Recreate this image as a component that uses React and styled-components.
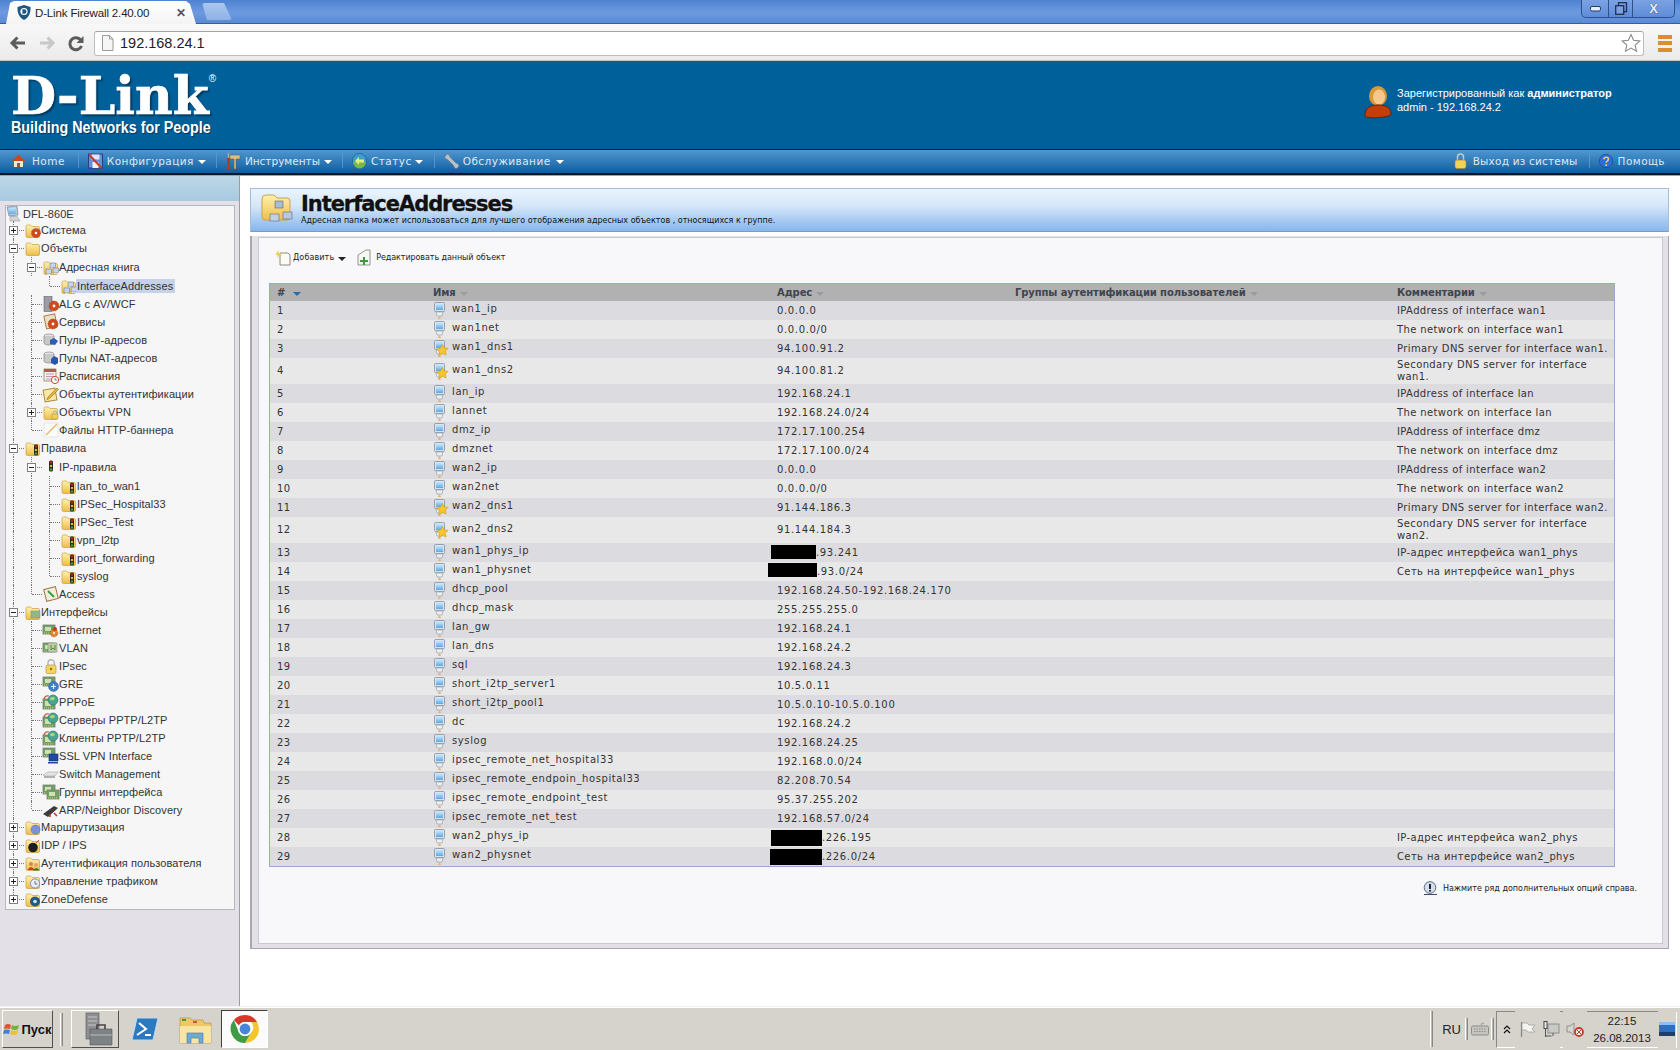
import React from "react";
import styled, { createGlobalStyle } from "styled-components";

const Global = createGlobalStyle`
  html, body { margin: 0; padding: 0; background: #fff; }
  #root { width: 1680px; height: 1050px; overflow: hidden; }
  * { box-sizing: border-box; }
`;

const Page = styled.div`
  width: 1680px; height: 1050px; display: flex; flex-direction: column; overflow: hidden;
  font-family: "Liberation Sans", Arial, sans-serif; color: #222;
`;

/* ---------- browser chrome ---------- */
const TabStrip = styled.div`
  height: 24px; flex: none; display: flex; align-items: flex-end; position: relative;
  background: linear-gradient(#4f83d0, #6c9ae0 55%, #5a8ad6);
  border-bottom: 1px solid #3a5f96;
`;
const Tab = styled.div`
  width: 202px; height: 23px; margin-bottom: -1px; padding: 0 10px 0 16px; display: flex; align-items: center; gap: 3px;
  background: linear-gradient(#ffffff, #f4f4f4);
  clip-path: polygon(0 100%, 6px 100%, 10px 2px, 14px 0, 186px 0, 190px 3px, 196px 100%, 202px 100%);
  font-size: 11.5px; color: #222; white-space: nowrap;
`;
const TabTitle = styled.span`flex: 1; letter-spacing: -0.15px;`;
const TabClose = styled.span`width: 16px; font-size: 12px; font-weight: bold; color: #555; line-height: 1;`;
const NewTab = styled.div`
  width: 30px; height: 17px; margin: 0 0 3px 0; border-radius: 3px 4px 3px 3px;
  background: linear-gradient(#a9c6ee, #8fb2e6);
  clip-path: polygon(0 0, 22px 0, 30px 100%, 5px 100%);
`;
const WindowButtons = styled.div`
  position: absolute; right: 5px; top: 0; height: 18px; display: flex;
  border: 1px solid #30508a; border-top: 0; border-radius: 0 0 5px 5px;
  background: linear-gradient(#7ba3e4, #5f8cd8);
`;
const WinBtn = styled.div`
  width: ${p => p.$w}px; display: flex; align-items: center; justify-content: center;
  border-left: ${p => (p.$first ? "0" : "1px solid #30508a")};
`;
const CloseGlyph = styled.span`font-size: 13px; font-weight: bold; color: #e8eefa; text-shadow: 0 0 1px #234;`;
const Toolbar = styled.div`
  height: 37px; flex: none; display: flex; align-items: center; padding: 2px 8px 0 3px;
  background: linear-gradient(#f8f8f8, #ebebeb); border-bottom: 1px solid #c4c4c4;
`;
const ToolBtn = styled.div`width: 29px; display: flex; justify-content: center; margin-right: ${p => p.$mr || 0}px;`;
const Omnibox = styled.div`
  flex: 1; height: 25px; display: flex; align-items: center; padding: 0 2px 0 6px;
  background: #fff; border: 1px solid #bdbdbd; border-top-color: #a4a4a4; border-radius: 3px;
`;
const Url = styled.span`flex: 1; font-size: 14.5px; margin-left: 6px; color: #222;`;
const Burger = styled.div`
  width: 14px; margin-left: 14px; height: 17px; display: flex; flex-direction: column; justify-content: space-between;
  & > i { display: block; height: 4px; background: #dd8c2e; }
`;

/* ---------- D-Link header ---------- */
const Header = styled.div`
  height: 88px; flex: none; background: #00619a; display: flex; justify-content: space-between; padding: 0 0 0 11px; position: relative;
`;
const LogoBox = styled.div`width: 210px; display: flex; flex-direction: column; color: #fff;`;
const LogoWord = styled.div`
  font-family: "DejaVu Serif", serif; font-weight: bold; font-size: 52px; line-height: 46px; margin-top: 12px; letter-spacing: 0; white-space: nowrap;
  -webkit-text-stroke: 0.7px #fff; text-shadow: 2px 2px 2px #00365c;
`;
const LogoMark = styled.sup`font-family: "Liberation Sans", sans-serif; font-size: 10px; font-weight: normal; vertical-align: 32px; line-height: 0; letter-spacing: 0; margin-left: 0; text-shadow: none; -webkit-text-stroke: 0;`;
const LogoTag = styled.div`
  font-family: "Liberation Sans", sans-serif; font-weight: bold; font-size: 16px; line-height: 18px; white-space: nowrap;
  transform: scaleX(0.895); transform-origin: left center; text-shadow: 1px 1px 1px #00365c;
`;
const UserBox = styled.div`width: 316px; display: flex; align-items: flex-start; padding-top: 24px; color: #fff; font-size: 11px; line-height: 14px; gap: 5px;`;
const UserText = styled.div`padding-top: 1px; & b { font-weight: bold; }`;

const Nav = styled.div`
  height: 26px; flex: none; display: flex; align-items: center; padding: 0 15px 2px 11px;
  background: linear-gradient(#4f97d0, #2f7ab8 50%, #125c9b);
  border-top: 1px solid #0b1b2b; border-bottom: 2px solid #0a1824;
  font-family: "DejaVu Sans", sans-serif; font-size: 10.5px; color: #dfe9f2;
`;
const NavSpacer = styled.div`flex: 1;`;
const NavItem = styled.div`display: flex; align-items: center; gap: ${p => p.$gap ?? 6}px; white-space: nowrap; letter-spacing: ${p => p.$ls ?? 0.45}px;`;
const NavSep = styled.div`width: 1px; height: 15px; background: #5f9bc9; opacity: .8; margin: 0 ${p => p.$r ?? 9}px 0 ${p => p.$l ?? 12}px;`;
const Caret = styled.span`
  width: 0; height: 0; display: inline-block; margin-left: ${p => p.$ml ?? 5}px; margin-top: 3px;
  border-left: 4px solid transparent; border-right: 4px solid transparent; border-top: 4px solid ${p => p.$c || "#fff"};
`;

/* ---------- body ---------- */
const Body = styled.div`flex: 1; display: flex; min-height: 0;`;
const Sidebar = styled.aside`
  width: 240px; flex: none; display: flex; flex-direction: column; background: #e4e0e8; border-right: 1px solid #9c9ca4; border-top: 1px solid #9aa3ad;
`;
const SideBand = styled.div`height: 25px; background: linear-gradient(#bcd7e7, #a8cadf); flex: none;`;
const TreePanel = styled.div`
  width: 230px; margin: 4px 0 0 5px; height: 705px; background: #f6f6f6; border: 1px solid #b8b8bc;
  font-size: 11px; color: #333; overflow: hidden;
`;
const TreeRow = styled.div`
  height: ${p => p.$h}px; display: flex; align-items: center; white-space: nowrap;
`;
const Guide = styled.div`
  width: 18px; height: 100%; flex: none; position: relative;
  &::before { content: ""; position: absolute; left: 7px; top: 0; bottom: ${p => (p.$last ? "9px" : 0)}; border-left: ${p => (p.$line ? "1px dotted #777" : "0")}; }
`;
const Elbow = styled(Guide)`
  &::after { content: ""; position: absolute; left: 8px; right: 0; top: 50%; border-top: 1px dotted #777; }
`;
const Expander = styled.span`
  position: absolute; left: 3px; top: calc(50% - 4px); width: 9px; height: 9px; z-index: 1; background: #fff; border: 1px solid #808080;
  &::before { content: ""; position: absolute; left: 1px; right: 1px; top: 3px; height: 1px; background: #222; }
  &::after { content: ""; position: absolute; top: 1px; bottom: 1px; left: 3px; width: 1px; background: #222; display: ${p => (p.$open ? "none" : "block")}; }
`;
const TreeIcon = styled.span`width: 15px; height: 16px; flex: none; display: flex; margin-left: 1px;`;
const TreeLabel = styled.span`padding: 1px 2px 1px 1px; letter-spacing: 0.08px; background: ${p => (p.$sel ? "#c5d2e8" : "transparent")}; position: relative;`;

const Main = styled.main`flex: 1; padding: 12px 11px 0 10px; background: #fff; border-top: 1px solid #9aa3ad; min-width: 0;`;
const TitlePanel = styled.div`
  height: 44px; display: flex; align-items: flex-start; padding: 4px 0 0 9px; gap: 8px;
  background: linear-gradient(#eaf4fd, #d5e7f9 40%, #86b6ec);
  border: 1px solid #a6bdd8; border-bottom-color: #7e9cc2;
`;
const TitleText = styled.div`display: flex; flex-direction: column; margin-top: -1px;`;
const Title = styled.h1`margin: 0; font: bold 21px/25px "DejaVu Sans", sans-serif; color: #111; letter-spacing: -1.05px; -webkit-text-stroke: 0.3px #111;`;
const Subtitle = styled.div`font: 8px/10px "DejaVu Sans", sans-serif; color: #111; margin-top: -1px; white-space: nowrap;`;
const Outer = styled.div`height: 713px; margin-top: 4px; padding: 1px 5px 4px 6px; background: #e4e0e8; border: 1px solid #a9a9ad; border-top: 0; border-left-width: 2px;`;
const Inner = styled.div`height: 100%; padding: 0 49px 0 10px; background: #f8f8fa; border: 1px solid #c9c9cf;`;
const ActionBar = styled.div`height: 44px; padding: 0 0 6px 6px; display: flex; align-items: center; gap: 10px; font: 8px "DejaVu Sans", sans-serif; color: #222;`;
const Action = styled.div`display: flex; align-items: center; gap: ${p => p.$gap}px; letter-spacing: ${p => p.$ls}px; white-space: nowrap;`;

const Table = styled.table`
  width: 1344px; table-layout: fixed; border-collapse: separate; border-spacing: 0; margin-top: 1px;
  border: 1px solid #93abd1; font: 10px/12px "DejaVu Sans", sans-serif; color: #333;
`;
const Th = styled.th`
  height: 17px; padding: 1px 2px 0 7px; background: #b1b1b1; font: bold 10px/12px "DejaVu Sans", sans-serif; color: #3e4450; text-align: left; white-space: nowrap; letter-spacing: -0.1px;
`;
const Tr = styled.tr`background: ${p => (p.$odd ? "#dcdbdf" : "#e8e8e8")};`;
const Td = styled.td`height: 19px; padding: 1px 1px 1px 7px; letter-spacing: ${p => p.$ls ?? 0.4}px; vertical-align: middle; overflow: visible;`;
const NameBox = styled.div`display: flex; align-items: flex-start; gap: 5px; height: 17px; line-height: 14px;`;
const NameTxt = styled.span`white-space: nowrap;`;
const Mask = styled.span`
  display: inline-block; vertical-align: middle; height: ${p => p.$h}px; width: ${p => p.$w}px; margin: ${p => p.$t ?? -2}px 0 0 ${p => p.$l}px; background: #000;
`;
const Hint = styled.div`
  margin-top: 14px; display: flex; align-items: center; justify-content: flex-end; gap: 5px; margin-right: -24px; font: 8px "DejaVu Sans", sans-serif; color: #222; white-space: nowrap;
`;

/* ---------- taskbar ---------- */
const Taskbar = styled.div`
  height: 44px; flex: none; display: flex; align-items: center; padding: 3px 3px 2px 2px; background: #d6d3cd; border-top: 1px solid #f4f2ee; box-shadow: inset 0 1px 0 #fff;
`;
const Raised = styled.div`
  width: ${p => p.$w}px; height: 38px; flex: none; display: flex; align-items: center; justify-content: center; margin-left: ${p => p.$ml || 0}px;
  background: ${p => (p.$on ? "#fbfbfb" : "#d6d3cd")};
  border: ${p => (p.$flat ? "0" : "1px solid")};
  border-color: ${p => (p.$on ? "#404040 #fff #fff #404040" : "#fff #505050 #505050 #fff")};
  border-width: ${p => (p.$flat ? 0 : 1.5)}px;
`;
const StartLabel = styled.span`font: bold 13px "Liberation Sans", sans-serif; color: #111; margin-left: 1px;`;
const TaskSep = styled.div`width: 3px; height: ${p => p.$h || 33}px; margin-left: ${p => p.$ml || 0}px; flex: none; background: #bcb9b2; border-left: 1px solid #fff; border-right: 1px solid #888;`;
const TaskGap = styled.div`flex: 1;`;
const Lang = styled.span`font-size: 13px; color: #222; margin: 0 4px 0 9px;`;
const Tray = styled.div`
  width: 181px; height: 37px; margin-left: 2px; display: flex; align-items: center; padding-left: 6px; flex: none;
  border: 1px solid; border-color: #888 #fff #fff #888;
`;
const Clock = styled.div`width: 66px; margin-left: 6px; padding-top: 1px; text-align: center; font-size: 11.5px; line-height: 17px; color: #222;`;
const DefsHolder = styled.svg`position: absolute; width: 0; height: 0;`;

/* ---------- drawings ---------- */
const Svg = ({ w = 16, h = 16, vb, children }) => (
  <svg width={w} height={h} viewBox={vb || `0 0 ${w} ${h}`} style={{ flex: "none", display: "block", overflow: "visible" }}>{children}</svg>
);
const Defs = () => (
  <DefsHolder aria-hidden="true">
    <defs>
      <linearGradient id="fold" x1="0" y1="0" x2="0" y2="1"><stop offset="0" stopColor="#fff2b0" /><stop offset="1" stopColor="#edbd45" /></linearGradient>
      <linearGradient id="scr" x1="0" y1="0" x2="0" y2="1"><stop offset="0" stopColor="#c4e8fb" /><stop offset="1" stopColor="#5ea6e2" /></linearGradient>
      <linearGradient id="bigfold" x1="0" y1="0" x2="0" y2="1"><stop offset="0" stopColor="#fff1ae" /><stop offset="1" stopColor="#eebf4c" /></linearGradient>
    </defs>
  </DefsHolder>
);
const FolderShape = () => (
  <path d="M1 4.500q0-1.500 1.500-1.500h3l1.500 1.500h6q1.500 0 1.500 1.500v8q0 1.500-1.500 1.500H2.500q-1.500 0-1.500-1.500z" fill="url(#fold)" stroke="#cfa64c" strokeWidth=".8" />
);
const Gear = ({ x = 11, y = 11, r = 3.6, c = "#cf4a1e" }) => (
  <g>
    <circle cx={x} cy={y} r={r + 1} fill={c} strokeDasharray="1.5 1" stroke="#a8320f" strokeWidth=".6" />
    <circle cx={x} cy={y} r={r * 0.35} fill="#fff" />
  </g>
);
const Light = ({ x = 11, y = 5 }) => (
  <g>
    <rect x={x - 2} y={y} width="4" height="11" rx="1.5" fill="#222" />
    <circle cx={x} cy={y + 2} r="1.3" fill="#c8261c" />
    <circle cx={x} cy={y + 5.5} r="1.3" fill="#d9b52a" />
    <circle cx={x} cy={y + 9} r="1.3" fill="#3fa53a" />
  </g>
);
const Card = ({ x = 0, y = 3, w = 12, h = 9 }) => (
  <g>
    <rect x={x} y={y} width={w} height={h} fill="#6fa35f" stroke="#7c7c7c" strokeWidth=".8" />
    <rect x={x + 2} y={y + 2} width={w - 6} height={h - 5} fill="#cfe0b8" />
    <path d={`M${x + 1} ${y + h - 1}h${w - 2}`} stroke="#d8d27a" strokeDasharray="1 1" />
  </g>
);
const Globe = ({ x = 9, y = 6, r = 5 }) => (
  <g>
    <circle cx={x} cy={y} r={r} fill="#4aa58f" stroke="#2c6c70" strokeWidth=".6" />
    <path d={`M${x - 3} ${y - 2}q3 -2 5 0q-1 3 -3 2q-2 1 -2 -2z`} fill="#a6d97a" />
  </g>
);
const Monitor = () => (
  <g>
    <rect x="1.500" y="0.500" width="10" height="9" rx="1" fill="#dbe2ea" stroke="#7f8fa6" strokeWidth=".8" />
    <rect x="3" y="2" width="7" height="6" fill="url(#scr)" />
    <path d="M3 10h7l-1 4H4z" fill="#eceef2" stroke="#99a0aa" strokeWidth=".7" />
    <path d="M6.500 14l1.700 3H4.800z" fill="#eeb16a" />
  </g>
);
const Barrels = () => (
  <>
    <ellipse cx="6" cy="4" rx="5" ry="2" fill="#e6e6e6" stroke="#777" strokeWidth=".6" />
    <path d="M1 4v7c0 2.600 10 2.600 10 0V4" fill="#c8c8c8" stroke="#777" strokeWidth=".6" />
  </>
);
const MiniHost = ({ x, y }) => (
  <g transform={`translate(${x} ${y})`}>
    <rect width="5.500" height="4.500" fill="#c6d6e8" stroke="#66707e" strokeWidth=".5" />
    <path d="M1 4.500h3.500v1.500H1z" fill="#dcdcdc" />
  </g>
);
const trees = {
  computer: <g><path d="M0 1l10-1 1 9-9 1z" fill="#b8c7dc" stroke="#6e83a3" strokeWidth=".7" /><path d="M1.500 2.200l7-.7.600 6-6.700.8z" fill="url(#scr)" /><path d="M3 10.500h7l3 4.500H3z" fill="#d3d3d8" stroke="#8a8a90" strokeWidth=".5" /></g>,
  folderGear: <g><FolderShape /><Gear /></g>,
  folder: <FolderShape />,
  folderBook2: <g><FolderShape /><MiniHost x={7} y={4} /><MiniHost x={10} y={9} /><MiniHost x={3} y={10} /></g>,
  server: <g><rect x="1" y="0.500" width="8" height="15" fill="#9c9ca8" stroke="#666" strokeWidth=".6" /><Gear x={11} y={10} r={4} /></g>,
  services: <g><rect x="2" y="1" width="11" height="13" fill="#eee0c4" stroke="#a8814a" transform="rotate(-12 7 7)" /><Gear x={10} y={10} r={4} /></g>,
  pool: <g><Barrels /><path d="M7 8l4-2 4 3-3 4-5-1z" fill="#2c5eb4" /></g>,
  nat: <g><Barrels /><path d="M8 9l3-3 4 2v5l-3 2-4-2z" fill="#2857ad" /></g>,
  calendar: <g><rect x="1" y="1" width="12" height="12" fill="#f4f0ea" stroke="#8a6d5a" strokeWidth=".7" /><rect x="1" y="1" width="12" height="3" fill="#b85b3d" /><path d="M3 6h8M3 8.500h8M3 11h5" stroke="#a79" strokeWidth=".7" /><circle cx="12" cy="12" r="3.600" fill="#fff" stroke="#c44a2a" /><path d="M12 10v2h2" stroke="#333" fill="none" strokeWidth=".6" /></g>,
  auth: <g><rect x="1" y="3" width="12" height="12" fill="#fbe7a6" stroke="#a88b3c" transform="rotate(-10 7 9)" /><path d="M5 11L14 2l1.500 1.500-9 9-2.500 1z" fill="#e7b73c" stroke="#8a6a1e" strokeWidth=".6" /></g>,
  folderLock: <g><FolderShape /><rect x="9" y="10" width="6" height="5" rx="1" fill="#f1d150" stroke="#a9872a" strokeWidth=".5" /><path d="M10.300 10V8.600a1.700 1.700 0 0 1 3.400 0V10" fill="none" stroke="#aaa" /></g>,
  page: <g><rect x="1" y="1" width="14" height="14" fill="#fbfbf8" stroke="#e0e0da" strokeWidth=".7" /><path d="M3 13L14 2" stroke="#e8b070" strokeWidth="1.200" /></g>,
  folderLight: <g><FolderShape /><Light x={11} y={4.500} /></g>,
  light: <Light x={8} y={1.500} />,
  access: <g><rect x="2" y="2" width="12" height="12" fill="#eff0d8" stroke="#a4714a" transform="rotate(-14 8 8)" /><path d="M5 5l3 3M11 11L8 8" stroke="#3e9a52" strokeWidth="2" /></g>,
  folderNet: <g><FolderShape /><rect x="6" y="7" width="9" height="7" fill="#8fb88c" stroke="#7c8f7a" strokeWidth=".5" /></g>,
  eth: <g><Card /><Gear x={11} y={11} r={2.800} c="#dd8a22" /><circle cx="12" cy="7" r="2" fill="#bf3a2a" /></g>,
  vlan: <g><Card /><rect x="5" y="3" width="9" height="9" fill="#bcd0a0" stroke="#888" strokeWidth=".6" /><path d="M8 5v5l2-2 2 2V5" stroke="#558b3e" fill="none" /></g>,
  lock: <g><path d="M5 7V5a3.200 3.200 0 0 1 6.400 0v2" fill="none" stroke="#b5b5b5" strokeWidth="1.400" /><rect x="3" y="7" width="10" height="8.500" rx="1.500" fill="#f3d55e" stroke="#b08f2d" strokeWidth=".6" /><circle cx="8" cy="11" r="1.200" fill="#8a6d1e" /></g>,
  gre: <g><Card x={0} y={1} /><circle cx="10.500" cy="10.500" r="5" fill="#3f7fc9" stroke="#285a98" strokeWidth=".5" /><path d="M8 10.500h5M10.500 8v5" stroke="#e3eefb" strokeWidth="1.200" /></g>,
  pppoe: <g><Card x={0} y={5} h={10} /><Globe x={10} y={6} /><path d="M1 5q1-4 5-3" fill="none" stroke="#c8562e" strokeWidth="1.200" /></g>,
  ssl: <g><Card x={0} y={0} /><rect x="6" y="6" width="9" height="7" fill="#2048a8" stroke="#122d6e" strokeWidth=".6" /><path d="M5 14h10v1.500H5z" fill="#29479a" /></g>,
  sw: <g><path d="M0 9l5-3h10l-3 4H2z" fill="#e4e4e6" stroke="#999" strokeWidth=".5" /><path d="M1 10h11v2H1z" fill="#b0b0b4" /></g>,
  group: <g><Card x={0} y={1} /><Card x={4} y={6} /></g>,
  arp: <g><path d="M0 12l11-8 4 2-10 9z" fill="#3c3c3e" /><path d="M7 12v3m4-4l3 3" stroke="#c03a2a" strokeWidth="1.600" /></g>,
  folderRoute: <g><FolderShape /><circle cx="10.500" cy="10.500" r="4.500" fill="#7d91d8" stroke="#5568ae" strokeWidth=".5" /></g>,
  folderBomb: <g><FolderShape /><circle cx="8" cy="10.500" r="4.800" fill="#1e1e1e" /><path d="M11 6l3-3" stroke="#c8421c" /></g>,
  folderUser: <g><FolderShape /><circle cx="6" cy="9" r="2" fill="#d9864a" /><path d="M2.500 15q3.500-6 7 0z" fill="#c8401e" /><circle cx="11" cy="10" r="2" fill="#e2a26a" /><path d="M8 15.500q3-5 7 0z" fill="#2b7b3c" /></g>,
  folderClock: <g><FolderShape /><circle cx="10" cy="10.500" r="4.600" fill="#e8eef6" stroke="#7a8fae" /><path d="M10 8v3h2.400" stroke="#456" fill="none" strokeWidth=".8" /></g>,
  folderD: <g><FolderShape /><circle cx="10" cy="10.500" r="4.600" fill="#1f5d8c" stroke="#124" strokeWidth=".5" /><circle cx="10" cy="10.500" r="1.800" fill="#cfe4f2" /></g>,
};

const TREE = [
  { g: "", i: "computer", t: "DFL-860E", root: true, h: 15 },
  { g: "", e: "+", i: "folderGear", t: "Система" },
  { g: "", e: "-", i: "folder", t: "Объекты" },
  { g: "|", e: "-", i: "folderBook2", t: "Адресная книга", h: 19 },
  { g: "|.", l: 1, i: "folderBook2", t: "InterfaceAddresses", sel: true, h: 19 },
  { g: "|", i: "server", t: "ALG с AV/WCF" },
  { g: "|", i: "services", t: "Сервисы" },
  { g: "|", i: "pool", t: "Пулы IP-адресов" },
  { g: "|", i: "nat", t: "Пулы NAT-адресов" },
  { g: "|", i: "calendar", t: "Расписания" },
  { g: "|", i: "auth", t: "Объекты аутентификации" },
  { g: "|", e: "+", i: "folderLock", t: "Объекты VPN" },
  { g: "|", l: 1, i: "page", t: "Файлы HTTP-баннера" },
  { g: "", e: "-", i: "folderLight", t: "Правила" },
  { g: "|", e: "-", i: "light", t: "IP-правила", h: 19 },
  { g: "||", i: "folderLight", t: "lan_to_wan1", h: 19 },
  { g: "||", i: "folderLight", t: "IPSec_Hospital33" },
  { g: "||", i: "folderLight", t: "IPSec_Test" },
  { g: "||", i: "folderLight", t: "vpn_l2tp" },
  { g: "||", i: "folderLight", t: "port_forwarding" },
  { g: "||", l: 1, i: "folderLight", t: "syslog" },
  { g: "|", l: 1, i: "access", t: "Access" },
  { g: "", e: "-", i: "folderNet", t: "Интерфейсы" },
  { g: "|", i: "eth", t: "Ethernet" },
  { g: "|", i: "vlan", t: "VLAN" },
  { g: "|", i: "lock", t: "IPsec" },
  { g: "|", i: "gre", t: "GRE" },
  { g: "|", i: "pppoe", t: "PPPoE" },
  { g: "|", i: "pppoe", t: "Серверы PPTP/L2TP" },
  { g: "|", i: "pppoe", t: "Клиенты PPTP/L2TP" },
  { g: "|", i: "ssl", t: "SSL VPN Interface" },
  { g: "|", i: "sw", t: "Switch Management" },
  { g: "|", i: "group", t: "Группы интерфейса" },
  { g: "|", l: 1, i: "arp", t: "ARP/Neighbor Discovery", h: 17 },
  { g: "", e: "+", i: "folderRoute", t: "Маршрутизация" },
  { g: "", e: "+", i: "folderBomb", t: "IDP / IPS" },
  { g: "", e: "+", i: "folderUser", t: "Аутентификация пользователя" },
  { g: "", e: "+", i: "folderClock", t: "Управление трафиком" },
  { g: "", e: "+", i: "folderD", t: "ZoneDefense", end: true },
];

const TreeItem = ({ n }) => {
  if (n.root) {
    return (
      <TreeRow $h={n.h}>
        <TreeIcon><Svg>{trees[n.i]}</Svg></TreeIcon>
        <TreeLabel>{n.t}</TreeLabel>
      </TreeRow>
    );
  }
  return (
    <TreeRow $h={n.h || 18}>
      {n.g.split("").map((c, i) => <Guide key={i} $line={c === "|"} />)}
      <Elbow $line $last={n.l === 1 || n.end}>
        {n.e && <Expander $open={n.e === "-"} />}
      </Elbow>
      <TreeIcon><Svg>{trees[n.i]}</Svg></TreeIcon>
      <TreeLabel $sel={n.sel}>{n.t}</TreeLabel>
    </TreeRow>
  );
};

const Host = ({ star }) => (
  <Svg w={14} h={17}>
    <Monitor />
    {star && <path d="M9.500 4.500l1.800 3.400 3.700.4-2.600 2.800.7 4-3.700-1.900-3.400 2.300.3-4.100L3.500 9l3.800-.8z" fill="#f7c52e" stroke="#c99a1e" strokeWidth=".6" />}
  </Svg>
);

const ROWS = [
  ["wan1_ip", "0.0.0.0", "IPAddress of interface wan1"],
  ["wan1net", "0.0.0.0/0", "The network on interface wan1"],
  ["wan1_dns1", "94.100.91.2", "Primary DNS server for interface wan1.", 1],
  ["wan1_dns2", "94.100.81.2", "Secondary DNS server for interface wan1.", 1],
  ["lan_ip", "192.168.24.1", "IPAddress of interface lan"],
  ["lannet", "192.168.24.0/24", "The network on interface lan"],
  ["dmz_ip", "172.17.100.254", "IPAddress of interface dmz"],
  ["dmznet", "172.17.100.0/24", "The network on interface dmz"],
  ["wan2_ip", "0.0.0.0", "IPAddress of interface wan2"],
  ["wan2net", "0.0.0.0/0", "The network on interface wan2"],
  ["wan2_dns1", "91.144.186.3", "Primary DNS server for interface wan2.", 1],
  ["wan2_dns2", "91.144.184.3", "Secondary DNS server for interface wan2.", 1],
  ["wan1_phys_ip", ".93.241", "IP-адрес интерфейса wan1_phys", 0, { l: -6, w: 45, h: 14 }],
  ["wan1_physnet", ".93.0/24", "Сеть на интерфейсе wan1_phys", 0, { l: -9, w: 49, h: 14, t: -4 }],
  ["dhcp_pool", "192.168.24.50-192.168.24.170", ""],
  ["dhcp_mask", "255.255.255.0", ""],
  ["lan_gw", "192.168.24.1", ""],
  ["lan_dns", "192.168.24.2", ""],
  ["sql", "192.168.24.3", ""],
  ["short_i2tp_server1", "10.5.0.11", ""],
  ["short_i2tp_pool1", "10.5.0.10-10.5.0.100", ""],
  ["dc", "192.168.24.2", ""],
  ["syslog", "192.168.24.25", ""],
  ["ipsec_remote_net_hospital33", "192.168.0.0/24", ""],
  ["ipsec_remote_endpoin_hospital33", "82.208.70.54", ""],
  ["ipsec_remote_endpoint_test", "95.37.255.202", ""],
  ["ipsec_remote_net_test", "192.168.57.0/24", ""],
  ["wan2_phys_ip", ".226.195", "IP-адрес интерфейса wan2_phys", 0, { l: -6, w: 51, h: 16, t: 0 }],
  ["wan2_physnet", ".226.0/24", "Сеть на интерфейсе wan2_phys", 0, { l: -7, w: 52, h: 16, t: 0 }],
];

const SortArrow = ({ on }) => <Caret $ml={4} $c={on ? "#2c6aa8" : "#9b9b9f"} />;

export default function App() {
  return (
    <Page>
      <Global />
      <Defs />
      <TabStrip>
        <Tab>
          <Svg w={16} h={17}>
            <path d="M8 1l6.500 2c.3 6-1.500 10.500-6.500 13C3 13.500 1.200 9 1.500 3z" fill="#20577f" />
            <circle cx="8" cy="7.500" r="3.600" fill="#fff" />
            <path d="M6.400 5.200h1.800a2.300 2.300 0 0 1 0 4.600H6.400z" fill="#20577f" />
          </Svg>
          <TabTitle>D-Link Firewall 2.40.00</TabTitle>
          <TabClose>✕</TabClose>
        </Tab>
        <NewTab />
        <WindowButtons>
          <WinBtn $w={26} $first><Svg w={11} h={6}><rect x=".5" y=".5" width="10" height="4.500" rx="1.500" fill="#e6eefb" stroke="#2c3c5c" /></Svg></WinBtn>
          <WinBtn $w={24}>
            <Svg w={12} h={13}><rect x="3.500" y=".7" width="8" height="9" fill="none" stroke="#20304f" strokeWidth="1.300" /><rect x=".7" y="3.700" width="8" height="8.600" fill="#7aa2e2" stroke="#20304f" strokeWidth="1.300" /></Svg>
          </WinBtn>
          <WinBtn $w={42}><CloseGlyph>X</CloseGlyph></WinBtn>
        </WindowButtons>
      </TabStrip>

      <Toolbar>
        <ToolBtn>
          <Svg w={16} h={14}><path d="M7.500 1.500L2 7l5.500 5.500M2.500 7H15" fill="none" stroke="#5c5c5c" strokeWidth="3" /></Svg>
        </ToolBtn>
        <ToolBtn>
          <Svg w={16} h={14}><path d="M8.500 1.500L14 7l-5.500 5.500M13.500 7H1" fill="none" stroke="#c8c8c8" strokeWidth="3" /></Svg>
        </ToolBtn>
        <ToolBtn $mr={4}>
          <Svg w={16} h={16}><path d="M13 5.500A6 6 0 1 0 13.500 11" fill="none" stroke="#5c5c5c" strokeWidth="3" /><path d="M15.500 1v7h-7z" fill="#5c5c5c" /></Svg>
        </ToolBtn>
        <Omnibox>
          <Svg w={13} h={16}><path d="M1.500.5h7l3.500 3.500v11.500h-10.500z" fill="#f6f6f6" stroke="#9a9a9a" /><path d="M8.500.5V4h3.500" fill="none" stroke="#9a9a9a" /></Svg>
          <Url>192.168.24.1</Url>
          <Svg w={20} h={20}><path d="M10 1.500l2.600 5.700 6.200.7-4.600 4.200 1.300 6.100L10 15.100l-5.500 3.100 1.300-6.100L1.200 7.900l6.200-.7z" fill="#fff" stroke="#8a8a8a" strokeWidth="1.100" /></Svg>
        </Omnibox>
        <Burger><i /><i /><i /></Burger>
      </Toolbar>

      <Header>
        <LogoBox>
          <LogoWord>D-Link<LogoMark>®</LogoMark></LogoWord>
          <LogoTag>Building Networks for People</LogoTag>
        </LogoBox>
        <UserBox>
          <Svg w={28} h={34}>
            <ellipse cx="14" cy="11" rx="9" ry="10" fill="#d99a33" />
            <ellipse cx="15" cy="12" rx="6" ry="7.500" fill="#f6c88e" />
            <path d="M1 31c0-9 6-11 13-11s13 2 13 9c0 4-26 5-26 2z" fill="#c23e0a" stroke="#6d2003" />
          </Svg>
          <UserText>
            Зарегистрированный как <b>администратор</b><br />admin - 192.168.24.2
          </UserText>
        </UserBox>
      </Header>

      <Nav>
        <NavItem>
          <Svg w={15} h={15}><path d="M1 8l6.500-6.500L14 8v1H1z" fill="#c8491f" /><rect x="3" y="8" width="9" height="6" fill="#f4ead0" /><rect x="6" y="10" width="3" height="4" fill="#9b5a2e" /></Svg>
          Home
        </NavItem>
        <NavSep $l={13} />
        <NavItem $gap={4}>
          <Svg w={15} h={16}><rect x=".5" y="1" width="14" height="14" fill="#6a8fd8" stroke="#2b3f7e" /><rect x="3.500" y="1.500" width="8" height="5" fill="#dfe6f6" /><rect x="4.500" y="9" width="6" height="6" fill="#f2f2f6" /><path d="M1.500 2l12 13" stroke="#d03a28" strokeWidth="2" /></Svg>
          Конфигурация<Caret $ml={0} />
        </NavItem>
        <NavSep $l={10} />
        <NavItem $gap={5} $ls={0}>
          <Svg w={14} h={18}><path d="M4 3h10v4H10v10H8V7H4z" fill="#d8c08a" stroke="#6a5a3a" strokeWidth=".5" /><path d="M1 6h3v11H1z" fill="#b53a22" /><path d="M1.800 1h1.400v5H1.800z" fill="#aaa" /></Svg>
          Инструменты<Caret $ml={-1} />
        </NavItem>
        <NavSep $l={10} />
        <NavItem $gap={4}>
          <Svg w={15} h={15}><circle cx="7.500" cy="7.500" r="7" fill="#3d9fd0" stroke="#1a5c88" strokeWidth=".7" /><path d="M1 9h13a6.500 6.500 0 0 1-13 0z" fill="#79b84a" /><path d="M3 8l4-4v2.500h5v3H7V12z" fill="#e2ee7a" /></Svg>
          Статус<Caret $ml={-1} />
        </NavItem>
        <NavSep $l={11} />
        <NavItem $gap={4}>
          <Svg w={15} h={16}><path d="M1 3.500L3 1l2 .5 1 2.500 6 6 2.500 1 .5 2.500-2.500 2-2-.5-1-2.500-6-6L1 5.500z" fill="#b5c0cc" stroke="#67737f" strokeWidth=".7" /></Svg>
          Обслуживание<Caret $ml={1} />
        </NavItem>
        <NavSpacer />
        <NavItem $gap={6} $ls={0.2}>
          <Svg w={13} h={17}><path d="M3.500 8V5a3 3 0 0 1 6 0v3" fill="none" stroke="#c7c7c7" strokeWidth="1.500" /><rect x="1" y="8" width="11" height="8.500" rx="2" fill="#f3d25a" stroke="#a68525" strokeWidth=".6" /></Svg>
          Выход из системы
        </NavItem>
        <NavSep $l={11} $r={9} />
        <NavItem $gap={5}>
          <Svg w={14} h={14}><circle cx="7" cy="7" r="6.700" fill="#2d6fd8" stroke="#123f94" strokeWidth=".6" /><path d="M4.800 5.300c.3-2.800 4.800-2.800 4.600 0 0 1.800-2.300 1.700-2.300 3.500" fill="none" stroke="#f2d24a" strokeWidth="1.600" /><circle cx="7.100" cy="11" r="1" fill="#f2d24a" /></Svg>
          Помощь
        </NavItem>
      </Nav>

      <Body>
        <Sidebar>
          <SideBand />
          <TreePanel>
            {TREE.map((n, i) => <TreeItem key={i} n={n} />)}
          </TreePanel>
        </Sidebar>

        <Main>
          <TitlePanel>
            <Svg w={33} h={30}>
              <path d="M2 6q0-4 4-4h8l3 3h10q3 0 3 3v16q0 3-3 3H5q-3 0-3-3z" fill="url(#bigfold)" stroke="#c9a24a" />
              <rect x="15" y="8" width="8" height="7" fill="#a5bbd6" stroke="#667" strokeWidth=".6" />
              <rect x="23" y="19" width="9" height="7" fill="#b5c9e0" stroke="#667" strokeWidth=".6" />
              <rect x="10" y="21" width="9" height="7" fill="#c0d2e6" stroke="#667" strokeWidth=".6" />
            </Svg>
            <TitleText>
              <Title>InterfaceAddresses</Title>
              <Subtitle>Адресная папка может использоваться для лучшего отображения адресных объектов , относящихся к группе.</Subtitle>
            </TitleText>
          </TitlePanel>

          <Outer>
            <Inner>
              <ActionBar>
                <Action $gap={1} $ls={0.12}>
                  <Svg w={17} h={17}><path d="M5 4h8l2 2v10H5z" fill="#fcfcf4" stroke="#6e6e68" strokeWidth=".8" /><path d="M3 1l1 3 3 1-3 1-1 3-1-3-2-1 2-1z" fill="#f0d34a" /></Svg>
                  Добавить<Caret $c="#222" $ml={3} />
                </Action>
                <Action $gap={4} $ls={-0.08}>
                  <Svg w={16} h={17}><path d="M2 6l8-5h4v15H2z" fill="#f6f6f2" stroke="#7c7c78" strokeWidth=".8" /><path d="M7 8h2v3h3v2H9v3H7v-3H4v-2h3z" fill="#3a9a3c" /></Svg>
                  <span>Редактировать данный объект</span>
                </Action>
              </ActionBar>
              <Table>
                <colgroup>
                  <col width="156" /><col width="344" /><col width="238" /><col width="382" /><col width="224" />
                </colgroup>
                <thead>
                  <tr>
                    <Th># <SortArrow on /></Th>
                    <Th>Имя<SortArrow /></Th>
                    <Th>Адрес<SortArrow /></Th>
                    <Th>Группы аутентификации пользователей<SortArrow /></Th>
                    <Th>Комментарии<SortArrow /></Th>
                  </tr>
                </thead>
                <tbody>
                  {ROWS.map((r, i) => (
                    <Tr key={i} $odd={i % 2 === 0}>
                      <Td $ls={0.5}>{i + 1}</Td>
                      <Td $ls={0.6}>
                        <NameBox><Host star={!!r[3]} /><NameTxt>{r[0]}</NameTxt></NameBox>
                      </Td>
                      <Td $ls={0.65}>
                        {r[4] && <Mask $l={r[4].l} $w={r[4].w} $h={r[4].h} $t={r[4].t} />}
                        {r[1]}
                      </Td>
                      <Td />
                      <Td $ls={0.38}>{r[2]}</Td>
                    </Tr>
                  ))}
                </tbody>
              </Table>
              <Hint>
                <Svg w={15} h={14}><circle cx="7" cy="6.500" r="5.800" fill="#d6dfe8" stroke="#4c6a84" /><rect x="6" y="3" width="2" height="5" fill="#223" /><rect x="6" y="9" width="2" height="1.500" fill="#223" /><path d="M1 13.500h13" stroke="#446" /></Svg>
                Нажмите ряд дополнительных опций справа.
              </Hint>
            </Inner>
          </Outer>
        </Main>
      </Body>

      <Taskbar>
        <Raised $w={51}>
          <Svg w={17} h={16}>
            <path d="M1 4q3-2 6 0l-1 4q-3-1-6 0z" fill="#e0552b" />
            <path d="M8 4q3 2 7 0l-1 4q-3 2-7 0z" fill="#76b13b" />
            <path d="M0 9q3-1 6 0l-1 4q-3-1-6 0z" fill="#3f83d0" />
            <path d="M7 9q3 2 7 0l-1 4q-3 2-7 0z" fill="#efc02a" />
          </Svg>
          <StartLabel>Пуск</StartLabel>
        </Raised>
        <TaskSep $ml={7} />
        <Raised $w={48} $ml={8}>
          <Svg w={36} h={36}>
            <rect x="9" y="2" width="13" height="26" fill="#8f8f92" stroke="#555" strokeWidth=".6" />
            <path d="M11 6h9M11 10h9M11 14h9" stroke="#c7c7c9" />
            <path d="M13 18h22v16H13z" fill="#7d8285" stroke="#555" strokeWidth=".6" />
            <path d="M20 18v-4h8v4" fill="none" stroke="#444" strokeWidth="1.600" />
            <path d="M13 24h22" stroke="#bcbcbc" />
          </Svg>
        </Raised>
        <Raised $w={32} $ml={10} $flat>
          <Svg w={28} h={24}>
            <path d="M6 1h21l-5 22H1z" fill="#2c79c0" stroke="#bcdcf3" />
            <path d="M8 6l7 6-9 6M14 18h6" fill="none" stroke="#fff" strokeWidth="2" />
          </Svg>
        </Raised>
        <Raised $w={40} $ml={14} $flat>
          <Svg w={33} h={29}>
            <path d="M1 3h10l2 2h11l1 3h7v20H1z" fill="#eec766" stroke="#b79345" strokeWidth=".7" />
            <path d="M1 11h31v17H1z" fill="#f8e5a6" />
            <path d="M3 4h4v2H3z" fill="#4a9a3a" /><path d="M14 6h4v2h-4z" fill="#c95a2b" />
            <path d="M8 18h16v10h-4v-5h-8v5H8z" fill="#6fa9d6" stroke="#3c78a8" strokeWidth=".6" />
          </Svg>
        </Raised>
        <Raised $w={47} $ml={6} $on>
          <Svg w={30} h={30}>
            <path d="M15 1a14 14 0 0 1 12.100 7H15a7 7 0 0 0-6.100 3.500L3.900 6A14 14 0 0 1 15 1z" fill="#d9372c" />
            <path d="M27.100 8A14 14 0 0 1 15 29l6.100-10.500A7 7 0 0 0 21 8z" fill="#f3c72c" />
            <path d="M3.900 6A14 14 0 0 0 15 29l6.100-10.500A7 7 0 0 1 8.900 18.500z" fill="#3e9c44" />
            <circle cx="15" cy="15" r="7" fill="#fff" /><circle cx="15" cy="15" r="5.400" fill="#4a84d8" />
          </Svg>
        </Raised>
        <TaskGap />
        <TaskSep $h={36} />
        <Lang>RU</Lang>
        <TaskSep $h={22} />
        <Raised $w={23} $flat>
          <Svg w={18} h={14}><path d="M10 3q0-2 3-2" fill="none" stroke="#999" /><rect x=".5" y="4" width="17" height="9" rx="1.500" fill="#c7c5c0" stroke="#8a8a86" /><path d="M3 7h12M3 9.500h12" stroke="#8f8f8b" strokeDasharray="1.500 1" /></Svg>
        </Raised>
        <TaskSep $h={22} />
        <Tray>
          <Svg w={8} h={9}><path d="M1 4l3-3 3 3M1 8l3-3 3 3" fill="none" stroke="#111" strokeWidth="1.200" /></Svg>
          <Raised $w={25} $ml={4} $flat>
            <Svg w={16} h={17}><path d="M1.500 1v15" stroke="#8a8a8a" strokeWidth="1.300" /><path d="M2 2h5l2 2h6l-3 4 3 3H8L6 9H2z" fill="#f4f3ef" stroke="#9a9a9a" strokeWidth=".7" /></Svg>
          </Raised>
          <Raised $w={20} $flat>
            <Svg w={17} h={17}><rect x="6" y="3" width="11" height="9" fill="#c9c9c6" stroke="#8e8e8b" /><rect x="2" y="0.500" width="3" height="7" fill="#eee" stroke="#444" /><path d="M3.500 7v9M3.500 15h6M11 12v3" stroke="#555" /></Svg>
          </Raised>
          <Raised $w={24} $ml={3} $flat>
            <Svg w={19} h={16}><path d="M1 5h3l4-3v12l-4-3H1z" fill="#d5d5d2" stroke="#8f8f8c" /><circle cx="13" cy="11" r="4" fill="#eee" stroke="#c83a2c" strokeWidth="1.800" /><path d="M11 9l4 4M15 9l-4 4" stroke="#c83a2c" /></Svg>
          </Raised>
          <Clock>22:15<br />26.08.2013</Clock>
          <Raised $w={18} $ml={7} $flat>
            <Svg w={16} h={14}><rect width="16" height="14" fill="#2b6fc0" /><rect y="10" width="16" height="4" fill="#1e3f68" /><rect x="0" y="0" width="16" height="3" fill="#8cc0ee" /></Svg>
          </Raised>
        </Tray>
      </Taskbar>
    </Page>
  );
}
